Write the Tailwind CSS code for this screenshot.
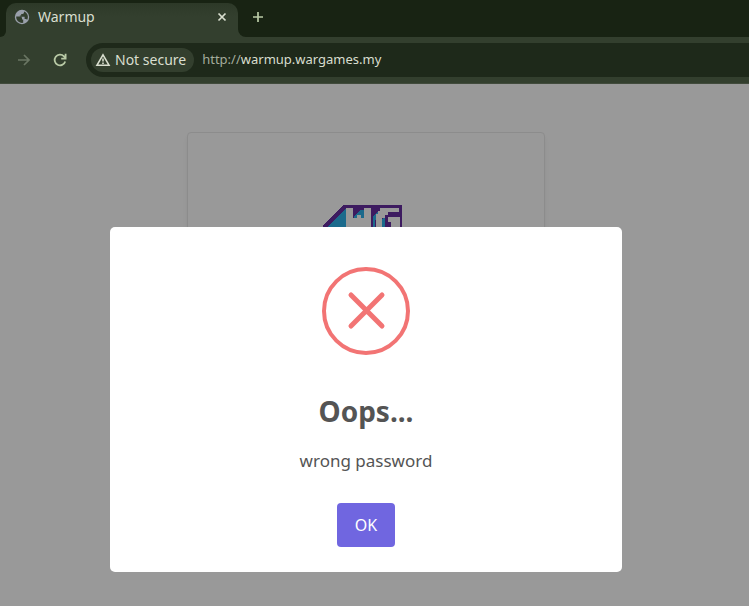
<!DOCTYPE html>
<html lang="en">
<head>
<meta charset="utf-8">
<meta name="viewport" content="width=device-width, initial-scale=1">
<title>Warmup</title>
<script src="https://cdn.jsdelivr.net/npm/@tailwindcss/browser@4"></script>
</head>
<body class="flex min-h-screen flex-col overflow-hidden bg-[#999999] font-['Noto_Sans',sans-serif]">
<header class="bg-[#333f2e] text-[#d9decf]">
  <div class="flex h-[37px] items-end bg-[#182313]">
    <div class="flex h-2 w-1.5 shrink-0 bg-[#333f2e]"><span class="h-full w-full rounded-br-lg bg-[#182313]"></span></div>
    <div class="flex h-[34px] w-[232px] items-center gap-2 rounded-t-[10px] bg-linear-to-b from-[#2d3928] to-[#333f2e] to-40% pr-2 pb-1.5 pl-2">
      <svg class="size-4 shrink-0" viewBox="0 0 16 16" aria-hidden="true"><circle cx="8" cy="8" r="7.200" fill="#9aa0ab"/><path d="M2.200 7.600H6.400Q8 7.600 8 9.200V10.600H9.200V13.800C5 14.400 2 11.400 2.200 7.600ZM10 2.400V3.600Q10 5 8.600 5H7.200V6.600H5.800V7.800H10.600V10H12L13.200 10.800C15 7 13.200 3.600 10 2.400Z" fill="#333f2e"/></svg>
      <span class="flex-1 text-sm leading-5">Warmup</span>
      <button class="p-0.5" aria-label="Close tab"><svg class="size-3" viewBox="0 0 12 12" fill="none" stroke="#d9decf" stroke-width="1.700"><path d="m2.500 2.500 7 7m0-7-7 7"/></svg></button>
    </div>
    <div class="flex h-2 w-2 shrink-0 bg-[#333f2e]"><span class="h-full w-full rounded-bl-lg bg-[#182313]"></span></div>
    <button class="mb-3.5 ml-1.5" aria-label="New tab"><svg class="size-3" viewBox="0 0 12 12" fill="none" stroke="#b9caa6" stroke-width="1.700"><path d="M6 1v10M1 6h10"/></svg></button>
  </div>
  <div class="flex h-[47px] items-center border-b border-[#414b3c] pl-4">
    <button class="mr-5" aria-label="Forward"><svg class="size-4" viewBox="0 0 16 16" fill="none" stroke="#6a7663" stroke-width="1.700"><path d="M2 8h11M8 3l5 5-5 5"/></svg></button>
    <button class="mr-[18px]" aria-label="Reload"><svg class="size-4" viewBox="0 0 16 16" fill="none" stroke="#b9caa6" stroke-width="1.800"><path d="M13.200 9.500A5.400 5.400 0 1 1 12 4.300L13.500 6M13.600 1.800v4.800H9.200"/></svg></button>
    <div class="flex h-[34px] flex-1 items-center gap-2 rounded-l-full bg-[#1e291a] pl-[5px]">
      <button class="flex h-6 items-center gap-1 rounded-full bg-[#333f2e] px-1 pr-2 text-sm"><svg class="size-4" viewBox="0 0 16 16" fill="none" stroke="#d9decf" stroke-width="1.600"><path d="M8 2.800 14 13.200H2ZM8 6.500v3M8 10.500V12"/></svg>Not secure</button>
      <p class="text-[13px]"><span class="text-[#a4ad9d]">http://</span>warmup.wargames.my</p>
    </div>
  </div>
</header>
<main class="flex-1 pt-12 pr-[17px]">
  <section class="mx-auto flex w-[358px] justify-center rounded border border-[#8c8c8c] py-[72px] shadow-md shadow-black/5">
    <svg class="h-20 w-[86px]" viewBox="0 0 86 80" shape-rendering="crispEdges" role="img" aria-label="WG">
      <path d="M21 0h58v80H0V20Z" fill="#3d1b60"/>
      <path d="M23 3v77H4V22Z" fill="#1b6a8c"/>
      <path d="M31 13V11l7-6h3v8ZM50 11l5-5v5l-3 5v6h-2ZM57 22V16l5-5v11Z" fill="#1b6a8c"/>
      <path d="M23 3h7v10h4V10h4v3h3V3h7v19H23ZM57 3h19v4H65v3h-3v3h-3v9h-6V9h2V6h2ZM65 12h12v10h-9v-5h-3Z" fill="#999999"/>
    </svg>
  </section>
</main>
<div class="fixed inset-x-0 top-[227px] pr-[17px]">
  <div role="dialog" aria-modal="true" aria-labelledby="title" class="mx-auto flex w-[512px] max-w-full flex-col items-center rounded-[5px] bg-white pt-10 pb-[25px] text-[#545454]">
    <svg class="size-[88px]" viewBox="0 0 88 88" fill="none" stroke="#f27474" aria-hidden="true"><circle cx="44" cy="44" r="42" stroke-width="4"/><path d="m29 28 31 31m0-31L29 59" stroke-width="5" stroke-linecap="round"/></svg>
    <h2 id="title" class="mt-9 text-[28px] leading-10 font-bold">Oops...</h2>
    <p class="mt-4 text-[17px] leading-7">wrong password</p>
    <button class="mt-7 h-11 w-[58px] rounded bg-[#7066e0] text-base text-white">OK</button>
  </div>
</div>
</body>
</html>
